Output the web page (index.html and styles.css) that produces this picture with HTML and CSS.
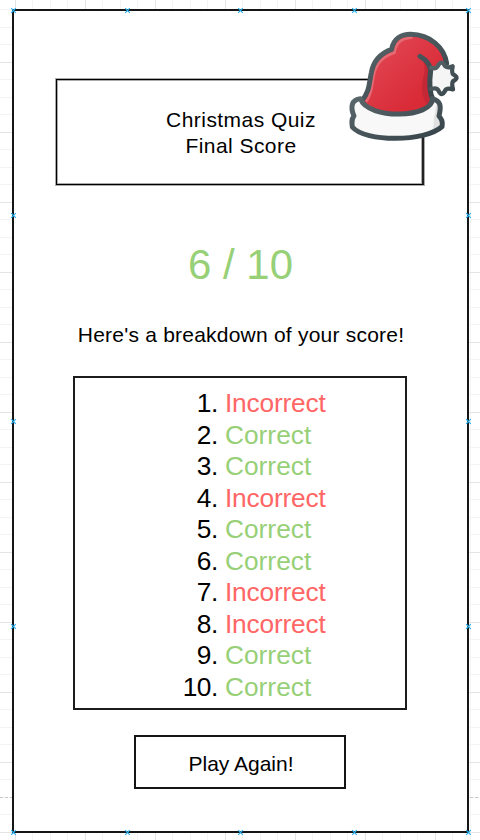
FILE: index.html
```
<!DOCTYPE html>
<html lang="en">
<head>
<meta charset="utf-8">
<title>Christmas Quiz</title>
<link rel="stylesheet" href="styles.css">
</head>
<body>
<svg class="grid" width="480" height="840" aria-hidden="true">
  <defs>
    <pattern id="cells" x="15" y="62" width="70" height="70" patternUnits="userSpaceOnUse">
      <path d="M17.5 0V70M35.5 0V70M52.5 0V70M0 17.5H70M0 35.5H70M0 52.5H70" stroke="#f4f4f4"/>
      <path d="M.5 0V70M0 .5H70" stroke="#e4e4e4"/>
    </pattern>
  </defs>
  <rect width="480" height="840" fill="url(#cells)"/>
  <path d="M0 797.5H480" stroke="#c8c8c8" stroke-dasharray="3 2"/>
</svg>
<main class="screen">
  <header class="title"><h1>Christmas Quiz</h1><p>Final Score</p></header>
  <p class="score">6 / 10</p>
  <p class="intro">Here's a breakdown of your score!</p>
  <section class="breakdown">
    <ol>
      <li><span class="num">1.</span><span class="bad">Incorrect</span></li>
      <li><span class="num">2.</span><span class="good">Correct</span></li>
      <li><span class="num">3.</span><span class="good">Correct</span></li>
      <li><span class="num">4.</span><span class="bad">Incorrect</span></li>
      <li><span class="num">5.</span><span class="good">Correct</span></li>
      <li><span class="num">6.</span><span class="good">Correct</span></li>
      <li><span class="num">7.</span><span class="bad">Incorrect</span></li>
      <li><span class="num">8.</span><span class="bad">Incorrect</span></li>
      <li><span class="num">9.</span><span class="good">Correct</span></li>
      <li><span class="num">10.</span><span class="good">Correct</span></li>
    </ol>
  </section>
  <button class="again">Play Again!</button>
</main>
<svg class="hat" viewBox="0 0 420 390" aria-hidden="true">
  <defs>
    <linearGradient id="red" x1="0" y1="0" x2="1" y2="1"><stop offset=".2" stop-color="#e04450"/><stop offset=".75" stop-color="#d92a37"/></linearGradient>
    <linearGradient id="ink" x1="0" y1="0" x2="1" y2="1"><stop offset="0" stop-color="#59666a"/><stop offset="1" stop-color="#364349"/></linearGradient>
  </defs>
  <path d="M64 244C90 214 87 190 94 158C101 119 127 98 155 88C160 55 184 43 212 43C271 44 313 83 320 130L288 137L272 151C264 183 268 220 284 247C240 290 104 295 64 244Z" fill="url(#red)"/>
  <path d="M78 245C99 219 95 190 102 162C110 127 134 107 163 98C169 68 184 54 218 52" fill="none" stroke="#e66a73" stroke-width="8"/>
  <path d="M240 109C258 119 268 130 272 151C264 183 268 220 284 247L264 257C240 226 244 191 253 161C256 137 252 121 240 109Z" fill="#c42736"/>
  <path d="M272 150L294 138L306 126L318 138L338 138L338 158L350 173L338 188L338 208L318 208L306 221L294 208L274 206Z" fill="#f5f5f5"/>
  <path d="M64 244C90 214 87 190 94 158C101 119 127 98 155 88C160 55 184 43 212 43C271 44 313 83 320 130M240 109C258 119 270 130 272 151C268 183 268 220 280 240" fill="none" stroke="url(#ink)" stroke-width="15" stroke-linecap="round" stroke-linejoin="round"/>
  <path d="M274 143Q288 148 294 137Q304 118 315 138Q320 145 338 139Q334 158 340 163Q359 173 340 183Q334 188 339 208Q320 203 316 211Q305 233 295 211Q290 202 273 207" fill="none" stroke="url(#ink)" stroke-width="13" stroke-linejoin="round" stroke-linecap="round"/>
  <path d="M61 236C35 238 30 261 42 288C34 298 35 307 37 321C75 367 256 366 306 320C309 304 305 298 297 288C305 256 301 243 277 236C279 294 85 301 61 236Z" fill="#f8f8f8"/>
  <path d="M294 246L298 270L291 288L302 305L300 320L274 333C286 317 278 302 283 287C288 273 283 262 294 246Z" fill="#e1e1e1"/>
  <path d="M61 236C35 238 30 261 42 288C34 298 35 307 37 321C75 367 256 366 306 320C309 304 305 298 297 288C305 256 301 243 277 236C279 294 85 301 61 236Z" fill="none" stroke="url(#ink)" stroke-width="15" stroke-linejoin="round"/>
</svg>
<svg class="handles" width="480" height="840" aria-hidden="true">
  <defs><path id="x" d="M-2.3-2.3L2.3 2.3M2.3-2.3L-2.3 2.3"/></defs>
  <g stroke="#29b0ee" stroke-width="1.2">
    <use href="#x" x="13.5" y="10.5"/><use href="#x" x="127.5" y="10.5"/><use href="#x" x="240.5" y="10.5"/><use href="#x" x="354.5" y="10.5"/><use href="#x" x="468.5" y="10.5"/>
    <use href="#x" x="13.5" y="215.5"/><use href="#x" x="468.5" y="215.5"/>
    <use href="#x" x="13.5" y="421.5"/><use href="#x" x="468.5" y="421.5"/>
    <use href="#x" x="13.5" y="626.5"/><use href="#x" x="468.5" y="626.5"/>
    <use href="#x" x="13.5" y="832.5"/><use href="#x" x="127.5" y="832.5"/><use href="#x" x="240.5" y="832.5"/><use href="#x" x="354.5" y="832.5"/><use href="#x" x="468.5" y="832.5"/>
  </g>
</svg>
</body>
</html>
```
FILE: styles.css
```
* { box-sizing: border-box; margin: 0; padding: 0; }
body {
  position: relative;
  width: 480px;
  height: 840px;
  overflow: hidden;
  background: #fff;
  color: #000;
  font-family: "Liberation Sans", Arial, sans-serif;
  font-size: 21px;
  line-height: 26px;
  padding: 9px 0 0 12px;
}
.grid, .handles { position: absolute; left: 0; top: 0; }
.screen {
  position: relative;
  width: 457px;
  height: 824px;
  padding-top: 69px;
  background: #fff;
  border: 2px solid #151515;
  display: flex;
  flex-direction: column;
  align-items: flex-start;
}
.title {
  width: 368px;
  height: 106px;
  margin-left: 42px;
  border: 1px solid #000;
  border-right: 2px solid #222;
  box-shadow: 0 0 0 1px #aaa, inset 0 0 0 1px #aaa;
  margin-top: -1px;
  padding: 27px 0 0 3px;
  text-align: center;
  letter-spacing: 0.45px;
}
.title h1 { font-size: inherit; font-weight: normal; }
.score {
  width: 100%;
  margin-top: 55px;
  color: #97d077;
  font-size: 42px;
  line-height: 50px;
  text-align: center;
}
.intro {
  width: 100%;
  margin-top: 32px;
  padding-left: 1px;
  text-align: center;
  letter-spacing: 0.22px;
  white-space: nowrap;
}
.breakdown {
  width: 334px;
  height: 334px;
  margin: 28px 0 0 59px;
  padding-top: 10px;
  border: 2px solid #1c1c1c;
  font-size: 26.3px;
  line-height: 31.5px;
}
ol { list-style: none; }
li { display: flex; gap: 7px; }
.num { width: 143px; text-align: right; letter-spacing: -0.4px; }
.good { color: #97d077; }
.bad { color: #ff6666; letter-spacing: -0.2px; }
.again {
  width: 212px;
  height: 54px;
  margin: 25px 0 0 120px;
  background: #fff;
  border: 2px solid #151515;
  color: #000;
  font: 21px/26px "Liberation Sans", Arial, sans-serif;
  padding: 4px 0 0 2px;
}
.hat { position: absolute; left: 340px; top: 20px; width: 140px; height: 130px; }
```
